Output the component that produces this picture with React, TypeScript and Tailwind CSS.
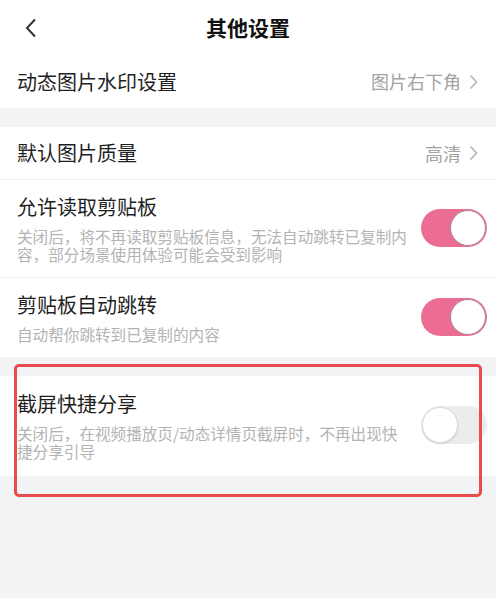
import React from 'react'

const FONT = { fontFamily: '"Noto Sans CJK SC", "Noto Sans", sans-serif' }

const Chevron = () => (
  <svg width="9" height="16" viewBox="0 0 9 16" className="ml-[8px]">
    <path d="M1.5 1.5 L7.5 8 L1.5 14.5" fill="none" stroke="#b4b4b4" strokeWidth="1.6" />
  </svg>
)

const Toggle = ({ on }: { on: boolean }) =>
  on ? (
    <div className="w-[66px] h-[38px] rounded-full bg-[#ec6d94] flex items-center justify-end pr-[1px] shrink-0">
      <div className="w-[36px] h-[36px] rounded-full bg-white border-[1.5px] border-[#a88592]" />
    </div>
  ) : (
    <div className="w-[66px] h-[38px] rounded-full bg-[#ececec] flex items-center justify-start pl-[1px] shrink-0">
      <div className="w-[36px] h-[36px] rounded-full bg-white border border-[#dcdcdc] shadow-[0_1px_2px_rgba(0,0,0,0.12)]" />
    </div>
  )

const LinkRow = ({ label, value, border }: { label: string; value: string; border?: boolean }) => (
  <div
    className={`h-[53px] bg-white flex items-center justify-between pl-[17px] pr-[18px] ${
      border ? 'border-b border-[#f1f1f1]' : ''
    }`}
  >
    <span className="text-[20px] text-[#1f1f1f]">{label}</span>
    <span className="flex items-center text-[18px] text-[#a3a3a3]">
      {value}
      <Chevron />
    </span>
  </div>
)

const SwitchRow = ({
  label,
  desc,
  on,
  border,
  tall,
}: {
  label: string
  desc: string
  on: boolean
  border?: boolean
  tall?: boolean
}) => (
  <div
    className={`bg-white flex items-center justify-between pl-[17px] pr-[9px] ${
      tall ? 'pt-[14px] pb-[16px]' : 'pt-[13px] pb-[14px]'
    } ${border ? 'border-b border-[#f1f1f1]' : ''}`}
  >
    <div className="w-[394px]">
      <div className="text-[20px] leading-[28px] text-[#1f1f1f]">{label}</div>
      <div className="mt-[6px] text-[15.6px] leading-[18px] text-[#b3b3b3]">{desc}</div>
    </div>
    <Toggle on={on} />
  </div>
)

export default function App() {
  return (
    <div className="relative w-full min-h-[598px] bg-[#f2f3f5]" style={FONT}>
      {/* Header */}
      <div className="h-[55px] bg-white flex items-center justify-center relative">
        <svg width="14" height="20" viewBox="0 0 14 20" className="absolute left-[24px] top-[18px]">
          <path d="M11 1.5 L3 10 L11 18.5" fill="none" stroke="#333" strokeWidth="2" />
        </svg>
        <span className="text-[21px] font-bold text-[#111]">其他设置</span>
      </div>

      <LinkRow label="动态图片水印设置" value="图片右下角" />

      <div className="h-[19px]" />

      <LinkRow label="默认图片质量" value="高清" border />
      <SwitchRow
        label="允许读取剪贴板"
        desc="关闭后，将不再读取剪贴板信息，无法自动跳转已复制内容，部分场景使用体验可能会受到影响"
        on
        border
      />
      <SwitchRow label="剪贴板自动跳转" desc="自动帮你跳转到已复制的内容" on />

      <div className="h-[19px]" />

      <SwitchRow
        label="截屏快捷分享"
        desc="关闭后，在视频播放页/动态详情页截屏时，不再出现快捷分享引导"
        on={false}
        tall
      />

      {/* annotation highlight */}
      <div className="absolute left-[14px] top-[364px] w-[468px] h-[133px] border-[3px] border-[#ea4b4d] rounded-[5px] pointer-events-none" />
    </div>
  )
}
